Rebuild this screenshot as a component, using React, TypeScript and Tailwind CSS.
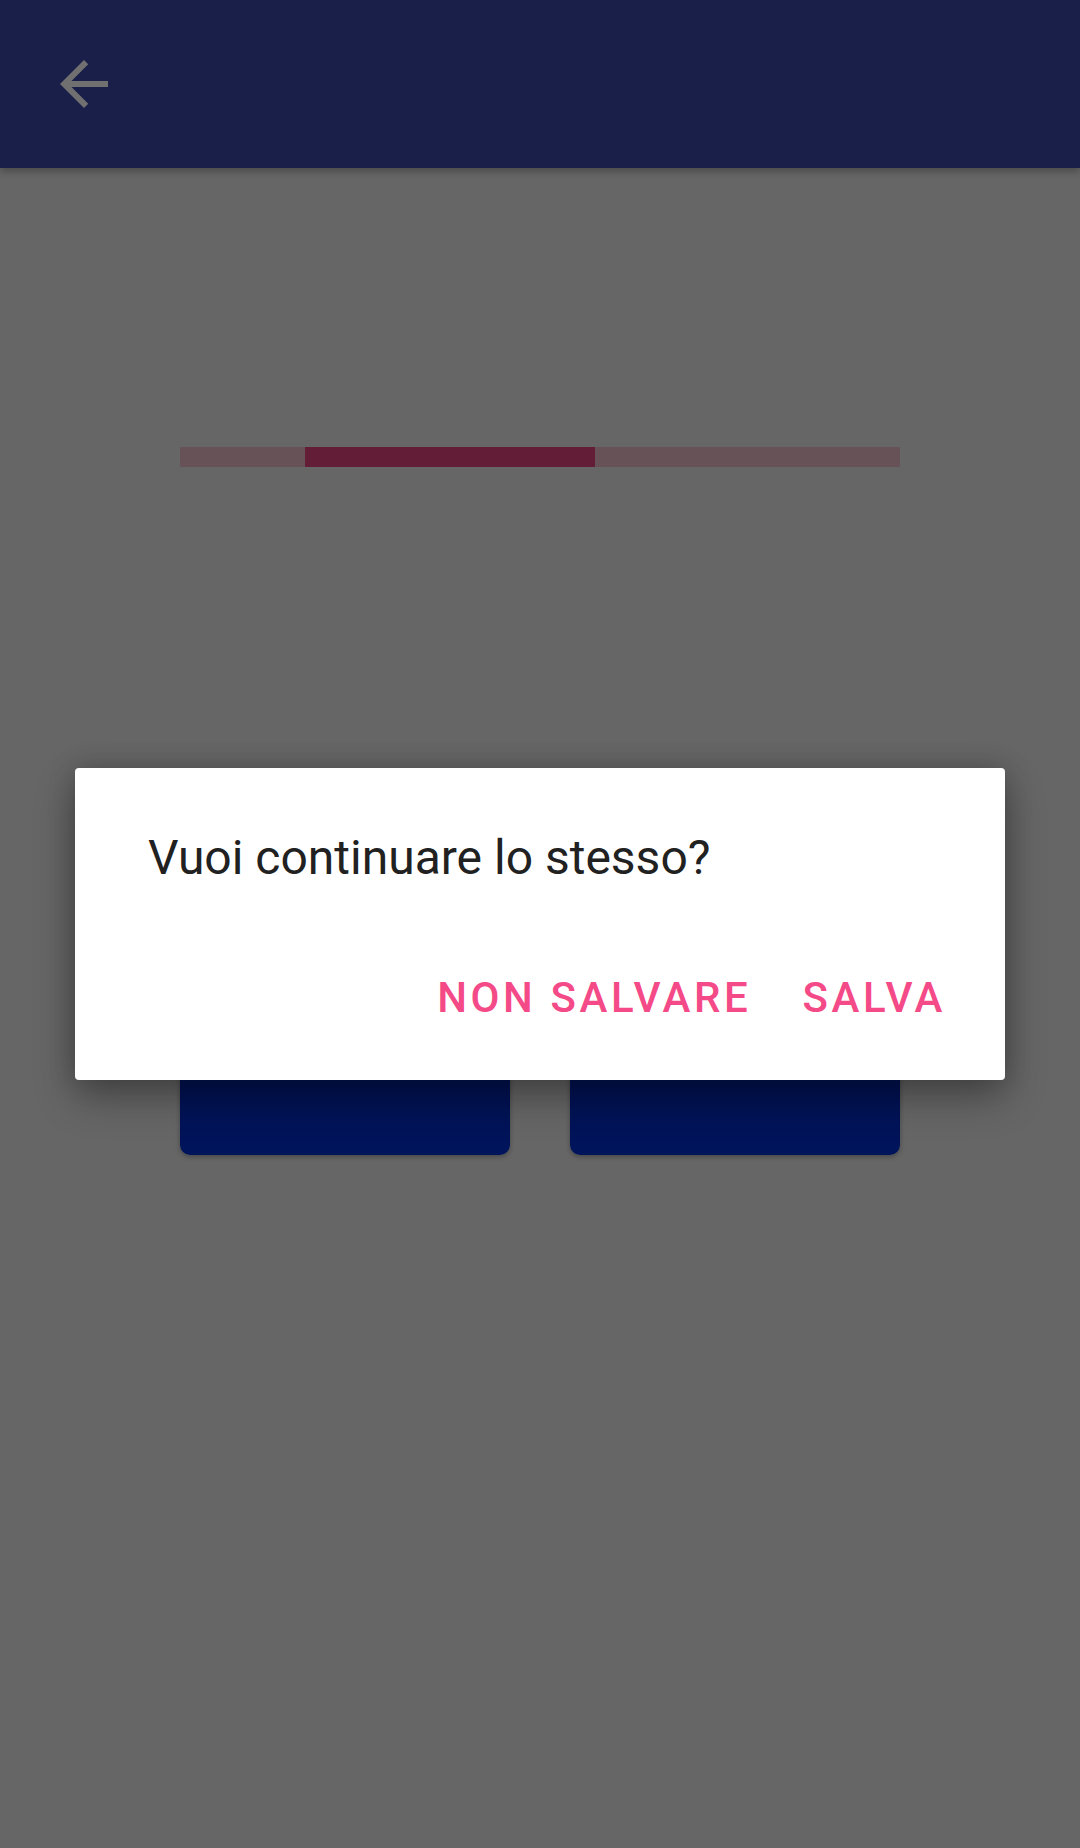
const font = { fontFamily: 'Roboto, "Noto Sans", sans-serif' };

function BackArrow() {
  return (
    <svg width="72" height="72" viewBox="0 0 24 24" fill="#707070">
      <path d="M20 11H7.83l5.59-5.59L12 4l-8 8 8 8 1.41-1.41L7.83 13H20v-2z" />
    </svg>
  );
}

function ProgressBar() {
  return (
    <div className="mx-[180px] mt-[279px] h-[20px] flex bg-[#665257]">
      <div className="w-[125px]" />
      <div className="w-[290px] bg-[#641d37]" />
    </div>
  );
}

function ConfirmDialog() {
  return (
    <div className="absolute left-[75px] top-[768px] w-[930px] h-[312px] bg-white rounded-[4px] flex flex-col shadow-[0_18px_40px_rgba(0,0,0,0.3),0_0_28px_rgba(0,0,0,0.2)]">
      <p className="pl-[73px] pt-[66px] text-[48px] leading-none text-[#212121]">
        Vuoi continuare lo stesso?
      </p>
      <div className="mt-[95px] flex justify-end gap-[51px] pr-[59px] text-[42px] leading-none font-medium tracking-[3.6px] text-[#f44a87]">
        <span>NON SALVARE</span>
        <span>SALVA</span>
      </div>
    </div>
  );
}

export default function App() {
  return (
    <div className="relative w-[1080px] h-[1848px] overflow-hidden bg-[#666666]" style={font}>
      <header className="relative z-10 h-[168px] bg-[#1a1f4a] flex items-start pl-[48px] pt-[48px] shadow-[0_3px_8px_rgba(0,0,0,0.3)]">
        <BackArrow />
      </header>

      <ProgressBar />

      <div className="mt-[533px] px-[180px] flex gap-[60px]">
        <div className="w-[330px] h-[155px] rounded-[10px] bg-gradient-to-b from-[#01104a] to-[#00145c] shadow-[0_2px_5px_rgba(0,0,0,0.3)]" />
        <div className="w-[330px] h-[155px] rounded-[10px] bg-gradient-to-b from-[#01104a] to-[#00145c] shadow-[0_2px_5px_rgba(0,0,0,0.3)]" />
      </div>

      <ConfirmDialog />
    </div>
  );
}
